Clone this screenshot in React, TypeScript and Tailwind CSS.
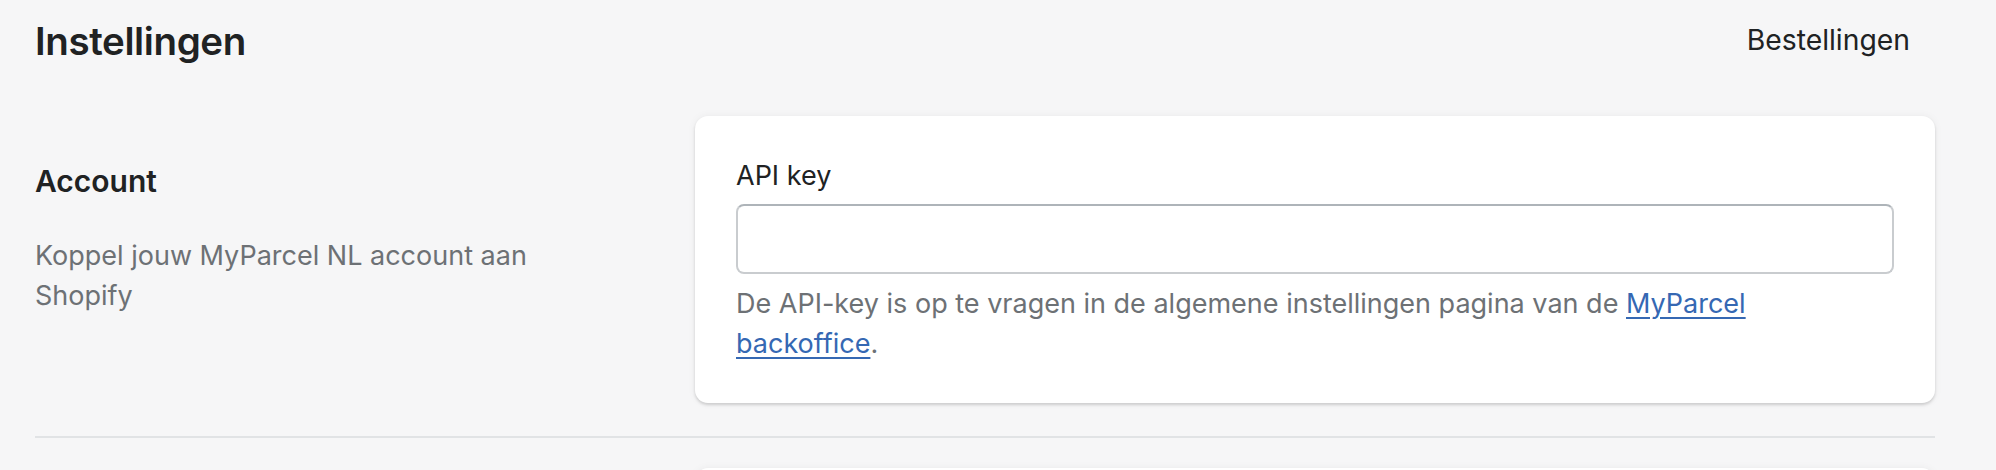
import React from "react";

export default function App() {
  const font = { fontFamily: "Inter, 'Noto Sans', sans-serif" } as React.CSSProperties;
  return (
    <div
      className="min-h-[470px] w-[1996px] bg-[#f6f6f7] pl-[35px] pr-[61px] pt-[13px] text-[#202223] overflow-hidden"
      style={font}
    >
      {/* Header */}
      <div className="flex items-start justify-between">
        <h1 className="text-[38.5px] leading-[56px] font-semibold tracking-[-0.01em]">Instellingen</h1>
        <button className="mt-[7px] mr-[25px] text-[28.3px] leading-[40px] font-normal text-[#202223]">
          Bestellingen
        </button>
      </div>

      {/* Account section */}
      <div className="mt-[47px] flex justify-between">
        <div className="w-[560px] pt-[45px]">
          <h2 className="text-[30px] leading-[40px] font-semibold">Account</h2>
          <p className="mt-[35px] text-[27px] leading-[40px] text-[#6d7175]">
            Koppel jouw MyParcel NL account aan Shopify
          </p>
        </div>
        <div className="w-[1240px] rounded-[13px] bg-white px-[41px] pt-[40px] pb-[39px] shadow-[0_0_8px_rgba(23,24,24,0.05),0_2px_3px_rgba(0,0,0,0.15)]">
          <label className="block text-[27px] leading-[40px] text-[#202223]">API key</label>
          <div className="mt-[8px] h-[70px] w-full rounded-[8px] border-[2px] border-[#c9cccf] border-t-[#aeb4b9] bg-white" />
          <p className="mt-[10px] text-[27px] leading-[40px] text-[#6d7175]">
            De API-key is op te vragen in de algemene instellingen pagina van de{" "}
            <a href="#" className="text-[#3568b3] underline underline-offset-[4px] decoration-[1.5px]">
              MyParcel backoffice
            </a>
            .
          </p>
        </div>
      </div>

      <div className="mt-[33px] h-[2px] bg-[#e1e3e5]" />

      {/* Next section (peeking) */}
      <div className="mt-[30px] flex justify-between">
        <div className="w-[560px]" />
        <div className="h-[80px] w-[1240px] rounded-[13px] bg-white shadow-[0_0_8px_rgba(23,24,24,0.05),0_2px_3px_rgba(0,0,0,0.15)]" />
      </div>
    </div>
  );
}
